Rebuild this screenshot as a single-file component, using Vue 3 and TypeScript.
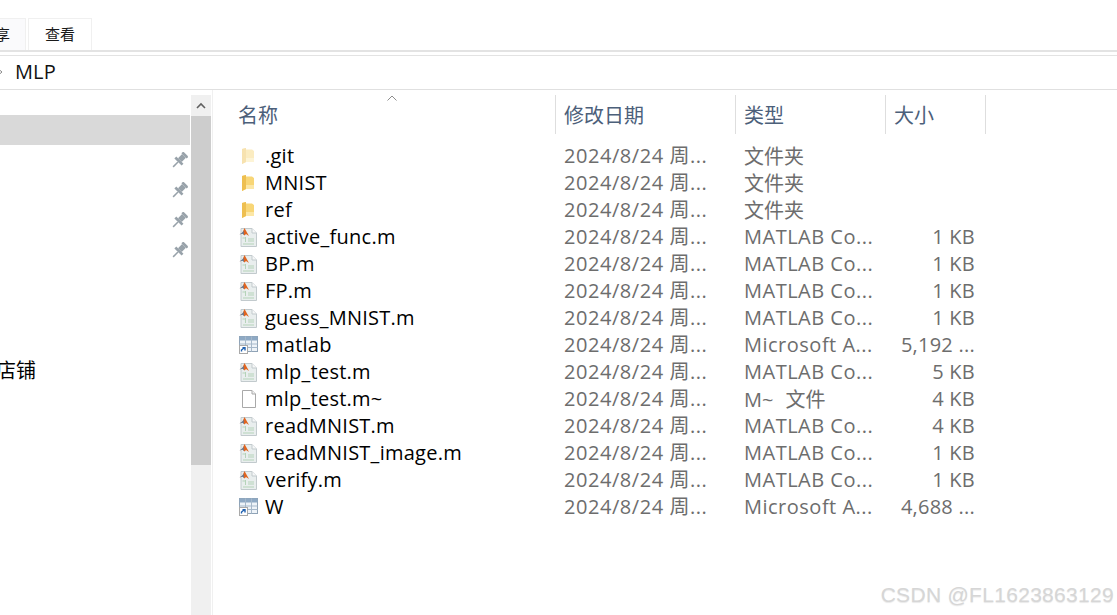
<script setup lang="ts">
type Kind = 'folder' | 'folderFaded' | 'matlab' | 'table' | 'blank'
interface Row { name: string; kind: Kind; type: string; size: string }
const m = 'MATLAB Co...'
const rows: Row[] = [
  { name: '.git', kind: 'folderFaded', type: '文件夹', size: '' },
  { name: 'MNIST', kind: 'folder', type: '文件夹', size: '' },
  { name: 'ref', kind: 'folder', type: '文件夹', size: '' },
  { name: 'active_func.m', kind: 'matlab', type: m, size: '1 KB' },
  { name: 'BP.m', kind: 'matlab', type: m, size: '1 KB' },
  { name: 'FP.m', kind: 'matlab', type: m, size: '1 KB' },
  { name: 'guess_MNIST.m', kind: 'matlab', type: m, size: '1 KB' },
  { name: 'matlab', kind: 'table', type: 'Microsoft A...', size: '5,192 ...' },
  { name: 'mlp_test.m', kind: 'matlab', type: m, size: '5 KB' },
  { name: 'mlp_test.m~', kind: 'blank', type: 'M~ 文件', size: '4 KB' },
  { name: 'readMNIST.m', kind: 'matlab', type: m, size: '4 KB' },
  { name: 'readMNIST_image.m', kind: 'matlab', type: m, size: '1 KB' },
  { name: 'verify.m', kind: 'matlab', type: m, size: '1 KB' },
  { name: 'W', kind: 'table', type: 'Microsoft A...', size: '4,688 ...' },
]
const pinRows = [0, 1, 2, 3]
const spacerRows = [0, 1, 2]
const hasCjk = (s: string): boolean => /[\u4e00-\u9fff]/.test(s)
</script>

<template>
  <div class="window">
    <div class="tabs">
      <div class="tab tab-clipped"><span class="tab-clip-text">享</span></div>
      <div class="tab tab-view">查看</div>
    </div>
    <div class="address">
      <svg class="crumb" width="4" height="6" viewBox="0 0 4 6"><path d="M0 0.5 L3 3 L0 5.5" fill="none" stroke="#8a8a8a" stroke-width="1" /></svg>
      <span class="crumb-name">MLP</span>
    </div>
    <div class="body">
      <aside class="nav">
        <div class="nav-row selected"></div>
        <div v-for="p in pinRows" :key="p" class="nav-row pinned">
          <svg width="17" height="17" viewBox="0 0 16 16">
            <g transform="rotate(45 8 8)" fill="#98a2aa">
              <rect x="4.5" y="-0.5" width="7" height="2.5" />
              <rect x="5.5" y="2" width="5" height="5.5" />
              <rect x="3.2" y="7.5" width="9.6" height="2.5" />
              <rect x="7.3" y="10" width="1.4" height="6.5" />
            </g>
          </svg>
        </div>
        <div v-for="s in spacerRows" :key="s" class="nav-row"></div>
        <div class="nav-row shop"><span class="shop-text">店铺</span></div>
      </aside>
      <div class="scrollbar">
        <div class="scroll-up">
          <svg width="10" height="7" viewBox="0 0 10 7"><path d="M1 6 L5 2 L9 6" fill="none" stroke="#606060" stroke-width="1.6" /></svg>
        </div>
        <div class="scroll-thumb"></div>
      </div>
      <main class="list">
        <svg class="sort" width="12" height="6" viewBox="0 0 12 6"><path d="M1.5 5.5 L6 1 L10.5 5.5" fill="none" stroke="#8d8d8d" stroke-width="1" /></svg>
        <div class="header">
          <div class="col name-col head-first">名称</div>
          <div class="col date-col head">修改日期</div>
          <div class="col type-col head">类型</div>
          <div class="col size-col head head-size">大小</div>
        </div>
        <div class="rows">
          <div v-for="r in rows" :key="r.name" class="row">
            <div class="col name-col file">
              <span class="icon">
                <svg v-if="r.kind === 'folder' || r.kind === 'folderFaded'" :class="{ faded: r.kind === 'folderFaded' }" width="18" height="20" viewBox="0 0 18 20">
                  <path d="M4 3 L8 2 L8 3.5 L14 3.5 L16 5 L16 16 L8 16 L4 18 Z" fill="#f8d677" />
                  <path d="M4 3 L8 2 L8 16 L4 18 Z" fill="#eebf50" />
                  <path d="M8 12 L16 12 L16 16 L8 16 Z" fill="#fce7a6" />
                </svg>
                <svg v-else-if="r.kind === 'matlab'" width="20" height="20" viewBox="0 0 20 20">
                  <path d="M3 1.5 L14 1.5 L18.5 6 L18.5 19.5 L3 19.5 Z" fill="#e9eeee" stroke="#c2cacd" />
                  <path d="M14 1.5 L14 6 L18.5 6" fill="#f7f8f8" stroke="#c2cacd" />
                  <path d="M4.5 11 h3 M7.5 10 v5 M10 12 h6 M10 14 h6 M5 17 h11" stroke="#b5d3b9" stroke-width="1" />
                  <path d="M1.5 7.5 L4.5 5.5 L6.5 1 L9 5.5 L11 9 L8 7 L6.5 8.5 L4.5 6.5 Z" fill="#e0641f" />
                  <path d="M1.5 7.5 L4.5 5.5 L5.5 3.5 L5.8 8 L4.5 6.5 Z" fill="#3f7fb5" />
                </svg>
                <svg v-else-if="r.kind === 'table'" width="21" height="18" viewBox="0 0 21 18">
                  <rect x="1.5" y="0.5" width="18" height="15" fill="#eef3f8" stroke="#8fa3b6" />
                  <rect x="1.5" y="0.5" width="18" height="4" fill="#8ea9c4" />
                  <path d="M1.5 8 H19.5 M1.5 11.5 H19.5 M7.5 0.5 V15.5 M13.5 0.5 V15.5" stroke="#a6b8ca" stroke-width="1" />
                  <rect x="1.5" y="9.5" width="8" height="8" fill="#fff" stroke="#a9a9a9" />
                  <path d="M3.5 15.5 L3.5 14 L6 12 M4.5 11.7 H7 V14.5" fill="none" stroke="#1d5fb0" stroke-width="1.4" />
                </svg>
                <svg v-else width="20" height="20" viewBox="0 0 20 20">
                  <path d="M4.5 1.5 L14 1.5 L17.5 5 L17.5 18.5 L4.5 18.5 Z" fill="#fff" stroke="#a9a9a9" />
                  <path d="M14 1.5 L14 5 L17.5 5" fill="#f2f2f2" stroke="#a9a9a9" />
                </svg>
              </span>
              <span class="file-name">{{ r.name }}</span>
            </div>
            <div class="col date-col meta date-val">2024/8/24 周...</div>
            <div class="col type-col meta type-val" :class="{ 'type-cjk': hasCjk(r.type) }">{{ r.type }}</div>
            <div class="col size-col meta size-val">{{ r.size }}</div>
          </div>
        </div>
      </main>
    </div>
    <div class="watermark">CSDN @FL1623863129</div>
  </div>
</template>

<style scoped>
.window {
  position: relative;
  width: 1117px;
  height: 615px;
  padding-top: 18px;
  box-sizing: border-box;
  overflow: hidden;
  background: #fff;
  font-family: "Open Sans", "Noto Sans CJK SC", sans-serif;
  color: #000;
}
.tabs {
  height: 32px;
  display: flex;
  gap: 2px;
  border-bottom: 2px solid #e3e3e3;
}
.tab {
  height: 32px;
  box-sizing: border-box;
  border: 1px solid #f0f0f0;
  border-bottom: none;
  background: #fff;
  font-size: 15px;
  line-height: 31px;
  color: #1a1a1a;
}
.tab-clipped {
  width: 26px;
  background: #fafafc;
  overflow: hidden;
  border-left: none;
}
.tab-clip-text { display: block; margin-left: -5px; }
.tab-view { width: 64px; text-align: center; }
.address {
  margin-top: 3px;
  height: 31px;
  padding-bottom: 2px;
  border-top: 1px solid #e3e3e3;
  border-bottom: 1px solid #e0e0e0;
  display: flex;
  align-items: center;
}
.crumb { margin-left: -1px; }
.crumb-name { margin-left: 12px; font-size: 20px; letter-spacing: 0.1px; color: #111; line-height: 31px; }
.body { display: flex; height: 525px; }
.nav { width: 190px; padding-top: 25px; flex: none; overflow: hidden; }
.nav-row { height: 30px; display: flex; align-items: center; justify-content: flex-end; padding-right: 2px; }
.selected { background: #d9d9d9; }
.pinned svg { margin-top: 1px; }
.shop { justify-content: flex-start; padding: 0 0 2px; box-sizing: border-box; }
.shop-text { margin-left: -4px; font-size: 20px; color: #000; }
.scrollbar { width: 20px; margin: 5px 0 0 1px; flex: none; background: #f0f0f0; display: flex; flex-direction: column; }
.scroll-up { height: 21px; display: flex; align-items: center; justify-content: center; }
.scroll-thumb { height: 349px; background: #cdcdcd; }
.list { position: relative; flex: 1; border-left: 1px solid #f0f0f0; margin-left: 1px; }
.sort { position: absolute; left: 173px; top: 5px; }
.header { display: flex; height: 39px; margin-top: 5px; }
.col { box-sizing: border-box; flex: none; }
.name-col { width: 342px; }
.date-col { width: 180px; }
.type-col { width: 150px; }
.size-col { width: 101px; }
.head, .head-first { font-size: 20px; line-height: 41px; height: 39px; color: #4c607a; }
.head-first { padding-left: 25px; }
.head { border-left: 1px solid #dedede; padding-left: 8px; }
.head-size { border-right: 1px solid #dedede; }
.rows { margin-top: 8px; }
.row { display: flex; height: 27px; align-items: center; }
.file { display: flex; align-items: center; padding-left: 25px; font-size: 20px; line-height: 27px; }
.icon { width: 27px; display: flex; align-items: center; flex: none; }
.faded { opacity: 0.45; }
.file-name { white-space: nowrap; letter-spacing: 0.25px; }
.meta { font-size: 20px; line-height: 27px; color: #6d6d6d; padding-left: 9px; white-space: nowrap; }
.date-val { letter-spacing: 0.55px; }
.type-val { letter-spacing: 0.5px; }
.type-cjk { letter-spacing: 0; word-spacing: 7px; padding-top: 2px; }
.size-val { text-align: right; padding: 0 11px 0 0; letter-spacing: 0.25px; }
.watermark {
  position: absolute;
  right: 3px;
  bottom: 8px;
  font-family: "Liberation Sans", sans-serif;
  font-size: 21px;
  line-height: 24px;
  color: #d6d6d6;
  text-shadow: 0 1px 1px #e8e8e8;
  letter-spacing: 0.3px;
}
</style>
